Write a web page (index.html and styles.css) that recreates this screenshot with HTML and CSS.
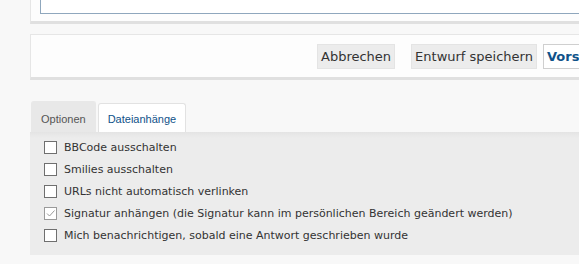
FILE: index.html
```html
<!DOCTYPE html>
<html lang="de">
<head>
<meta charset="utf-8">
<title>Antwort</title>
<link rel="stylesheet" href="styles.css">
</head>
<body>
<div class="page">
  <div class="panel editor">
    <div class="textarea"></div>
  </div>
  <div class="panel submit">
    <button class="btn">Abbrechen</button>
    <button class="btn">Entwurf speichern</button>
    <button class="btn primary">Vorschau</button>
  </div>
  <div class="tabs">
    <div class="tab active">Optionen</div>
    <div class="tab">Dateianhänge</div>
  </div>
  <div class="options">
    <label class="opt"><span class="box"></span>BBCode ausschalten</label>
    <label class="opt"><span class="box"></span>Smilies ausschalten</label>
    <label class="opt"><span class="box"></span>URLs nicht automatisch verlinken</label>
    <label class="opt"><span class="box checked"><svg width="11" height="11" viewBox="0 0 11 11"><path d="M2 5.5 L4.5 8 L9.5 2.5" fill="none" stroke="#9a9a9a" stroke-width="1"/></svg></span>Signatur anhängen (die Signatur kann im persönlichen Bereich geändert werden)</label>
    <label class="opt"><span class="box"></span>Mich benachrichtigen, sobald eine Antwort geschrieben wurde</label>
  </div>
</div>
</body>
</html>
```
FILE: styles.css
```css
html, body {
  margin: 0;
  padding: 0;
}
body {
  background: #f8f8f8;
  font-family: "DejaVu Sans", Verdana, sans-serif;
  width: 579px;
  height: 264px;
  overflow: hidden;
}
.page {
  padding-left: 30px;
  width: 600px;
}
.panel {
  background: #fdfdfd;
  border: 1px solid #e6e6e6;
  border-right: none;
  border-bottom: 3px solid #e0e0e0;
}
.editor {
  border-top: none;
  height: 21px;
  padding-left: 9px;
}
.textarea {
  height: 13px;
  background: #fff;
  border: 1px solid #8fa7bd;
  border-top: none;
  border-right: none;
}
.submit {
  margin-top: 10px;
  height: 42px;
  display: flex;
  align-items: center;
  padding-left: 286px;
  gap: 16px;
}
.btn {
  font-family: "DejaVu Sans", Verdana, sans-serif;
  font-size: 13px;
  color: #333;
  background: #ececec;
  border: 1px solid #e4e4e4;
  height: 25px;
  padding: 0 3px;
  margin: 0;
  flex: none;
}
.btn.primary {
  background: #fff;
  border: 1px solid #cfcfcf;
  color: #105289;
  font-weight: bold;
  margin-left: -10px;
}
.tabs {
  margin-top: 21px;
  display: flex;
  align-items: flex-end;
  gap: 2px;
  padding-left: 1px;
  height: 31px;
}
.tab {
  font-family: "Liberation Sans", Arial, sans-serif;
  font-size: 11px;
  height: 30px;
  box-sizing: border-box;
  padding: 10px 9px 0;
  border: 1px solid #e2e2e2;
  border-bottom: none;
  border-radius: 3px 3px 0 0;
}
.tab.active {
  background: #e8e8e8;
  color: #555;
  height: 31px;
  padding-top: 11px;
  border-color: #e8e8e8;
}
.tab:not(.active) {
  background: #fff;
  color: #105289;
  padding: 9px 9px 0;
  height: 29px;
}
.options {
  background: linear-gradient(#e4e4e4, #ececec 6px);
  height: 123px;
  padding: 4px 0 0 14px;
  box-sizing: border-box;
}
.opt {
  display: flex;
  align-items: center;
  height: 22px;
  font-size: 11px;
  color: #333;
}
.box {
  width: 11px;
  height: 11px;
  border: 1px solid #6f6f6f;
  background: #fff;
  margin-right: 7px;
  display: flex;
  flex: none;
}
.box.checked {
  border-color: #9a9a9a;
}
```
